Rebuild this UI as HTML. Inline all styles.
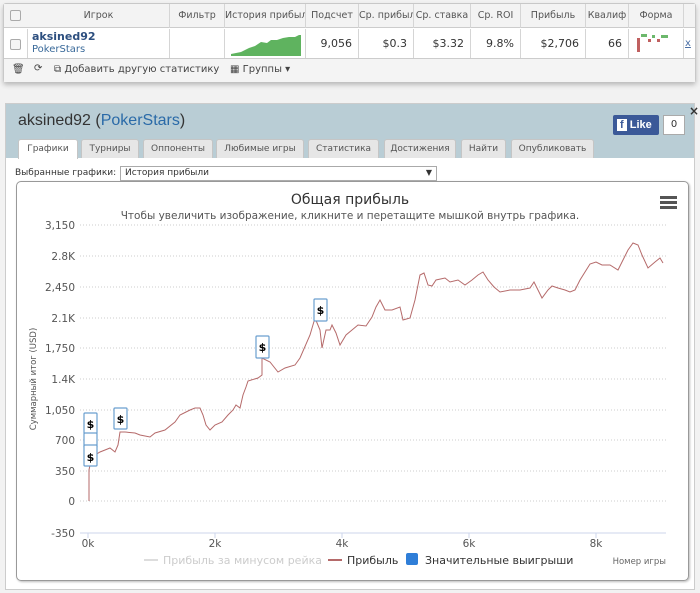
<!DOCTYPE html>
<html><head><meta charset="utf-8"><style>
*{box-sizing:border-box;margin:0;padding:0}
body{width:700px;height:593px;background:#f2f2f2;font-family:"DejaVu Sans","Liberation Sans",sans-serif;position:relative;overflow:hidden;color:#333}
.a{position:absolute}
.top{left:3px;top:3px;width:693px;height:79px;background:#fff;border:1px solid #c8c8c8;box-shadow:0 3px 5px #bbb;border-radius:3px}
.hdr{left:0;top:0;width:691px;height:24px;background:#f3f3f3;border-bottom:1px solid #ccc}
.c{position:absolute;font-size:9.5px;color:#555;line-height:24px;border-right:1px solid #d5d5d5;white-space:nowrap;overflow:hidden;text-align:center}
.r{position:absolute;top:25px;height:29px;border-right:1px solid #d5d5d5;font-size:11px;line-height:29px;text-align:right;padding-right:6px;color:#333}
.cb{position:absolute;width:11px;height:11px;border:1px solid #aaa;border-radius:2px;background:#f4f4f4}
.tb{left:0;top:54px;width:691px;height:24px;border-top:1px solid #ccc;background:#f4f4f4;font-size:10px;color:#444}
.pan{left:5px;top:103px;width:690px;height:487px;background:#fff;border:1px solid #ccc}
.ph{left:0;top:0;width:688px;height:54px;background:#b9cdd5}
.tab{position:absolute;top:35px;height:19px;background:#e6e6e6;border:1px solid #c5c5c5;border-bottom:none;font-size:9px;color:#555;text-align:center;line-height:18px;border-radius:3px 3px 0 0}
svg text{font-family:"DejaVu Sans","Liberation Sans",sans-serif}
</style></head><body>
<div class="a top">
 <div class="a hdr"></div>
 <div class="c" style="left:0;width:24px"></div><div class="cb" style="left:6px;top:6px"></div>
 <div class="c" style="left:24px;width:142px">Игрок</div>
 <div class="c" style="left:166px;width:55px">Фильтр</div>
 <div class="c" style="left:221px;width:81px">История прибыль</div>
 <div class="c" style="left:302px;width:53px">Подсчет</div>
 <div class="c" style="left:355px;width:55px">Ср. прибыль</div>
 <div class="c" style="left:410px;width:57px">Ср. ставка</div>
 <div class="c" style="left:467px;width:50px">Ср. ROI</div>
 <div class="c" style="left:517px;width:65px">Прибыль</div>
 <div class="c" style="left:582px;width:43px">Квалиф</div>
 <div class="c" style="left:625px;width:55px">Форма</div>
 <div class="c" style="left:680px;width:11px;border:none"></div>
 <div class="r" style="left:0;width:24px"></div><div class="cb" style="left:6px;top:35px"></div>
 <div class="r" style="left:24px;width:142px;text-align:left;padding:2px 4px;line-height:12px"><b style="color:#2d4f7f;font-size:11px">aksined92</b><br><span style="color:#3a6a9a;font-size:10px">PokerStars</span></div>
 <div class="r" style="left:166px;width:55px"></div>
 <div class="r" style="left:221px;width:81px"><svg class="a" style="left:6px;top:3px" width="70" height="24"><path d="M0 24L0 22 10 20 18 16 24 14 30 10 36 11 40 8 46 8 52 6 58 5 64 5 68 3 70 3 70 24Z" fill="#5fb35f"/></svg></div>
 <div class="r" style="left:302px;width:53px">9,056</div>
 <div class="r" style="left:355px;width:55px">$0.3</div>
 <div class="r" style="left:410px;width:57px">$3.32</div>
 <div class="r" style="left:467px;width:50px">9.8%</div>
 <div class="r" style="left:517px;width:65px">$2,706</div>
 <div class="r" style="left:582px;width:43px">66</div>
 <div class="r" style="left:625px;width:55px"><svg class="a" style="left:8px;top:5px" width="40" height="20"><rect x="0" y="4" width="3" height="14" fill="#c06060"/><rect x="4" y="0" width="6" height="3" fill="#6cb86c"/><rect x="11" y="5" width="3" height="3" fill="#c06060"/><rect x="15" y="1" width="3" height="3" fill="#6cb86c"/><rect x="20" y="5" width="3" height="3" fill="#c06060"/><rect x="24" y="1" width="7" height="3" fill="#6cb86c"/></svg></div>
 <div class="r" style="left:680px;width:11px;border:none;color:#4a6fa5;font-size:10px;text-decoration:underline;text-align:left;padding-left:1px">x</div>
 <div class="a tb"><span class="a" style="left:8px;top:5px">🗑</span><span class="a" style="left:30px;top:4px">⟳</span><span class="a" style="left:50px;top:5px">⧉ Добавить другую статистику</span><span class="a" style="left:226px;top:5px">▦ Группы ▾</span></div>
</div>

<div class="a pan">
 <div class="a ph"></div>
 <div class="a" style="left:12px;top:8px;font-family:'Liberation Sans',sans-serif;font-size:16px;color:#333">aksined92 (<span style="color:#2a6aa8">PokerStars</span>)</div>
 <div class="a" style="left:607px;top:11px;width:46px;height:20px;background:#3b5998;border-radius:2px;color:#fff;font:bold 11px 'Liberation Sans',sans-serif;line-height:20px;padding-left:4px"><span style="background:#fff;color:#3b5998;padding:0 3px;font-size:11px">f</span> Like</div>
 <div class="a" style="left:657px;top:11px;width:22px;height:20px;background:#fff;border:1px solid #aaa;font-size:10px;text-align:center;line-height:18px">0</div>
 <div class="a" style="left:683px;top:0;font-size:12px;font-weight:bold">×</div>
 <div class="tab" style="left:12px;width:60px;background:#fff;height:20px">Графики</div>
 <div class="tab" style="left:75px;width:58px">Турниры</div>
 <div class="tab" style="left:137px;width:70px">Оппоненты</div>
 <div class="tab" style="left:210px;width:88px">Любимые игры</div>
 <div class="tab" style="left:302px;width:71px">Статистика</div>
 <div class="tab" style="left:378px;width:72px">Достижения</div>
 <div class="tab" style="left:455px;width:45px">Найти</div>
 <div class="tab" style="left:505px;width:83px">Опубликовать</div>
 <div class="a" style="left:9px;top:64px;font-size:9px;color:#333">Выбранные графики:</div>
 <div class="a" style="left:114px;top:62px;width:317px;height:15px;border:1px solid #aaa;font-size:9px;padding:1px 4px;background:#fff">История прибыли<span style="float:right;font-size:8px">▼</span></div>
 <div class="a" style="left:10px;top:77px;width:673px;height:400px;border:1px solid #999;border-radius:5px;box-shadow:1px 1px 2px #bbb"></div>
</div>

<svg class="a" style="left:0;top:0" width="700" height="593">
 <text x="350" y="204" text-anchor="middle" font-size="14" fill="#333">Общая прибыль</text>
 <text x="350" y="219" text-anchor="middle" font-size="10.5" fill="#555">Чтобы увеличить изображение, кликните и перетащите мышкой внутрь графика.</text>
 <g fill="#555"><rect x="660" y="196" width="17" height="3"/><rect x="660" y="201" width="17" height="3"/><rect x="660" y="206" width="17" height="3"/></g>
 <g stroke="#ccc" stroke-dasharray="1,2">
  <line x1="80" x2="666" y1="225" y2="225"/><line x1="80" x2="666" y1="256" y2="256"/><line x1="80" x2="666" y1="287" y2="287"/><line x1="80" x2="666" y1="318" y2="318"/><line x1="80" x2="666" y1="348" y2="348"/><line x1="80" x2="666" y1="379" y2="379"/><line x1="80" x2="666" y1="410" y2="410"/><line x1="80" x2="666" y1="440" y2="440"/><line x1="80" x2="666" y1="471" y2="471"/><line x1="80" x2="666" y1="501" y2="501"/>
 </g>
 <line x1="80" x2="666" y1="533" y2="533" stroke="#ccd6eb"/>
 <g stroke="#ccd6eb"><line x1="88" x2="88" y1="533" y2="538"/><line x1="215" x2="215" y1="533" y2="538"/><line x1="342" x2="342" y1="533" y2="538"/><line x1="469" x2="469" y1="533" y2="538"/><line x1="596" x2="596" y1="533" y2="538"/></g>
 <g font-size="10.5" fill="#555" text-anchor="end">
  <text x="75" y="229">3,150</text><text x="75" y="260">2.8K</text><text x="75" y="291">2,450</text><text x="75" y="322">2.1K</text><text x="75" y="352">1,750</text><text x="75" y="383">1.4K</text><text x="75" y="414">1,050</text><text x="75" y="444">700</text><text x="75" y="475">350</text><text x="75" y="505">0</text><text x="75" y="537">-350</text>
 </g>
 <g font-size="10.5" fill="#555" text-anchor="middle"><text x="88" y="547">0k</text><text x="215" y="547">2k</text><text x="342" y="547">4k</text><text x="469" y="547">6k</text><text x="596" y="547">8k</text></g>
 <text transform="translate(36,379) rotate(-90)" text-anchor="middle" font-size="8.5" fill="#555">Суммарный итог (USD)</text>
 <polyline fill="none" stroke="#b56a6a" stroke-width="1" points="89,501 89,470 91,460 95,455 100,452 105,450 110,448 115,452 118,445 120,432 125,432 135,433 140,435 150,437 155,433 165,430 175,422 180,415 190,410 195,408 200,408 203,415 206,425 210,430 215,425 222,422 228,415 233,410 236,405 240,408 243,395 246,387 248,381 258,378 262,375 262,358 270,362 278,372 285,368 295,365 300,358 310,335 315,318 320,330 322,348 326,330 330,330 332,325 336,333 340,345 346,335 352,330 358,325 366,326 372,317 376,307 380,300 385,310 392,310 400,307 403,320 410,318 415,300 420,275 424,273 428,285 432,286 436,280 445,278 450,282 458,280 465,285 472,280 478,275 483,272 488,280 494,287 500,292 510,290 520,290 530,288 534,282 538,290 542,298 548,290 552,286 558,288 565,290 570,292 575,290 580,280 585,272 590,264 596,262 602,265 610,265 618,270 622,262 628,250 633,243 638,245 642,255 648,268 655,262 660,258 663,263"/>
 <g fill="#fff" stroke="#6a9fcf" stroke-width="1.2">
  <rect x="84" y="413" width="13" height="21" rx="1"/><rect x="84" y="433" width="13" height="15" rx="1"/><rect x="84" y="445" width="13" height="21" rx="1"/><rect x="114" y="408" width="13" height="21" rx="1"/><rect x="256" y="336" width="13" height="22" rx="1"/><rect x="314" y="299" width="13" height="22" rx="1"/>
 </g>
 <g font-size="11" font-weight="bold" fill="#000" text-anchor="middle"><text x="90.5" y="428">$</text><text x="90.5" y="461">$</text><text x="120.5" y="423">$</text><text x="262.5" y="351">$</text><text x="320.5" y="314">$</text></g>
 <line x1="144" x2="158" y1="560" y2="560" stroke="#ddd" stroke-width="2"/>
 <text x="163" y="564" font-size="11" fill="#ccc">Прибыль за минусом рейка</text>
 <line x1="328" x2="342" y1="560" y2="560" stroke="#b56a6a" stroke-width="2"/>
 <text x="347" y="564" font-size="11" fill="#333">Прибыль</text>
 <rect x="406" y="553" width="12" height="12" rx="2" fill="#2f7ed8"/>
 <text x="425" y="564" font-size="11" fill="#333">Значительные выигрыши</text>
 <text x="666" y="564" text-anchor="end" font-size="8.5" fill="#666">Номер игры</text>
</svg>
</body></html>
